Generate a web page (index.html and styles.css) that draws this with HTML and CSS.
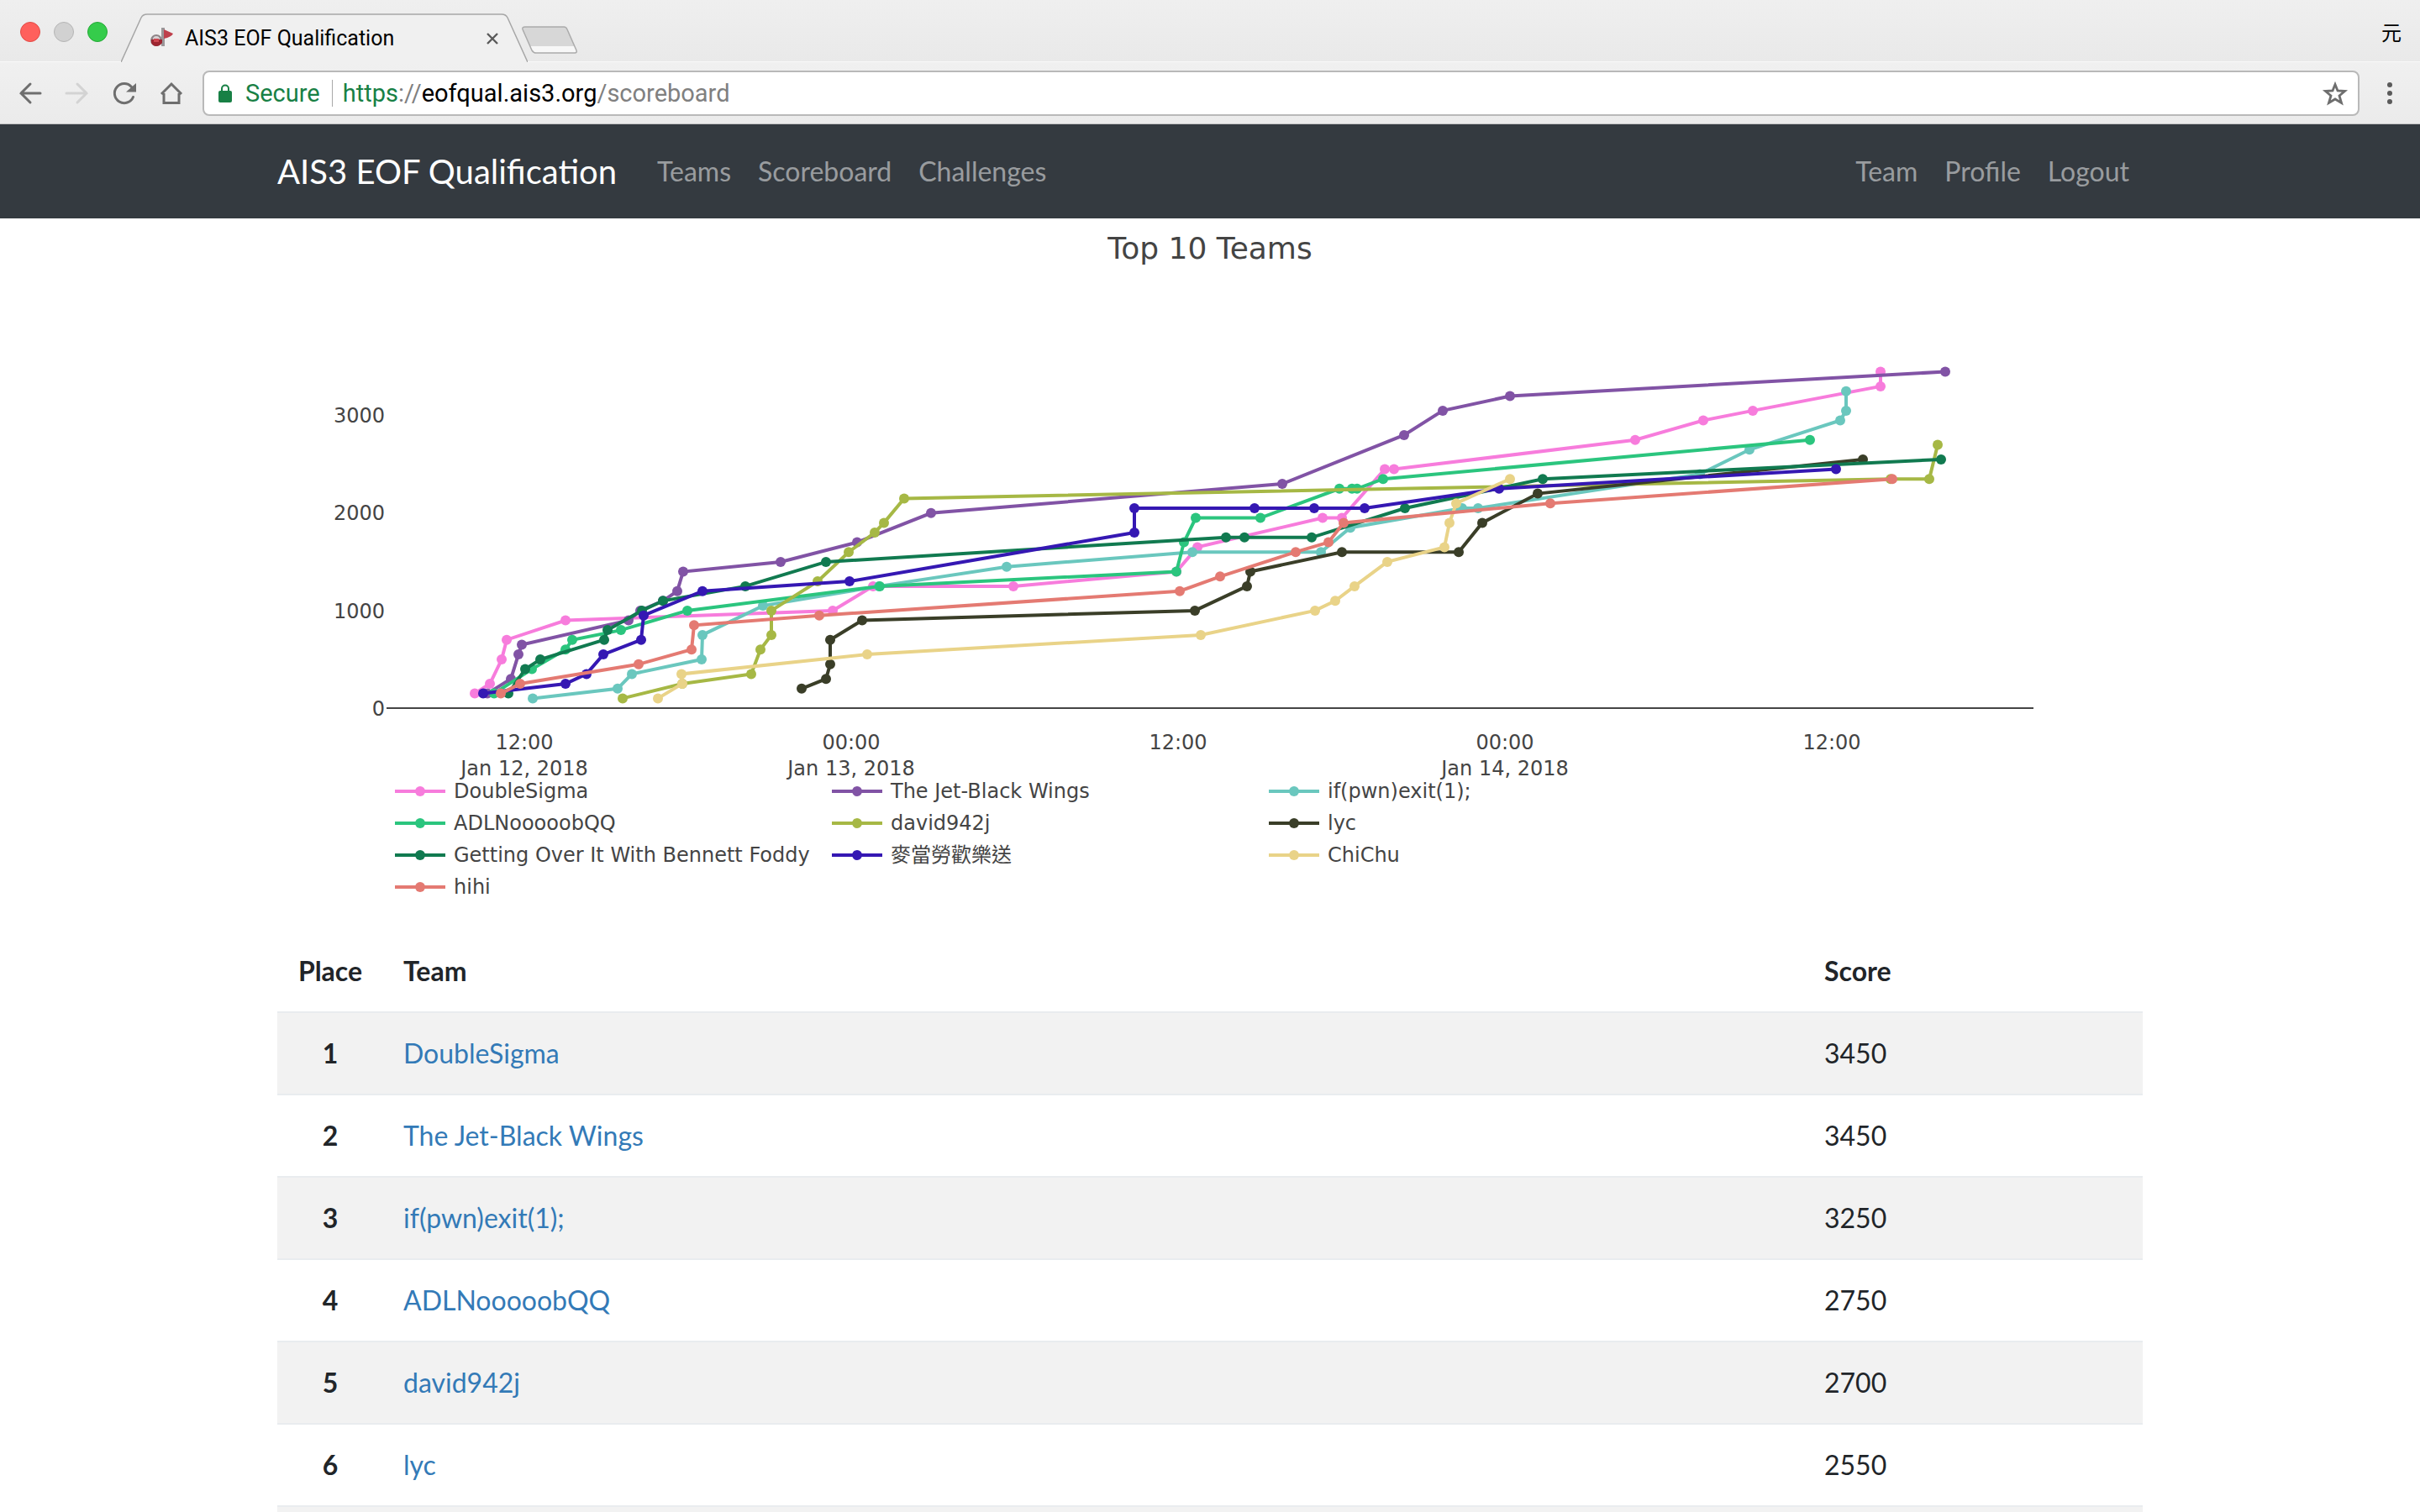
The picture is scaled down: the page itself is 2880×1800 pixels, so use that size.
FILE: index.html
```html
<!DOCTYPE html>
<html lang="en">
<head>
<meta charset="utf-8">
<title>AIS3 EOF Qualification</title>
<link rel="stylesheet" href="styles.css">
</head>
<body>
<div class="browser">
  <header class="chrome">
    <div class="tabstrip">
      <div class="lights">
        <button class="light light-close" aria-label="Close window"></button>
        <button class="light light-min" aria-label="Minimize"></button>
        <button class="light light-max" aria-label="Full screen"></button>
      </div>
      <div class="tab">
        <svg class="tab-shape" viewBox="0 0 484 58" aria-hidden="true"><path d="M0 58 L24 5 Q26 1 31 1 H453 Q458 1 460 5 L484 58" fill="#f0f0f0" stroke="#a6a6a6" stroke-width="1.5"/></svg>
        <svg class="favicon" viewBox="0 0 32 32" aria-hidden="true">
          <path d="M16 3h4v22h-4z" fill="#9a9698"/><path d="M19 5 L30 10 Q28 14 19 16z" fill="#be3f4b"/>
          <circle cx="10" cy="18" r="7" fill="#8f8588"/><circle cx="10" cy="17" r="4" fill="#d9d2d4"/><path d="M4 17h13v4q-3 4-7 4t-6-4z" fill="#9c2530"/><path d="M7 16h6v4H7z" fill="#ce4650"/>
        </svg>
        <span class="tab-title">AIS3 EOF Qualification</span>
        <button class="tab-close" aria-label="Close tab"><svg viewBox="0 0 16 16"><path d="M2 2 L14 14 M14 2 L2 14" stroke="#5a5a5a" stroke-width="2.4"/></svg></button>
      </div>
      <button class="new-tab" aria-label="New tab"><svg viewBox="0 0 68 34"><path d="M5 1 H51 Q54 1 55 4 L66 29 Q67 32 64 32 H18 Q15 32 13 29 L2 4 Q1 1 5 1z" fill="#d7d7d7"/><path d="M11 24 H64 L66 29 Q67 32 64 32 H18 Q15 32 13 29z" fill="#f7f7f7"/><path d="M5 1 H51 Q54 1 55 4 L66 29 Q67 32 64 32 H18 Q15 32 13 29 L2 4 Q1 1 5 1z" fill="none" stroke="#ababab" stroke-width="1.5"/></svg></button>
      <button class="user">元</button>
    </div>
    <div class="toolbar">
      <div class="nav-buttons">
        <button aria-label="Back"><svg viewBox="0 0 32 32"><path d="M28 16 H5 M16 5 L5 16 L16 27" fill="none" stroke="#6e6e6e" stroke-width="3" stroke-linecap="round"/></svg></button>
        <button aria-label="Forward" disabled><svg viewBox="0 0 32 32"><path d="M3 16 H27 M16 5 L27 16 L16 27" fill="none" stroke="#d3d3d3" stroke-width="3" stroke-linecap="round"/></svg></button>
        <button aria-label="Reload"><svg viewBox="0 0 32 32"><path d="M26.500 20.500 A11.500 11.500 0 1 1 24.500 8.500" fill="none" stroke="#6e6e6e" stroke-width="3" stroke-linecap="round"/><path d="M30 4 V14.500 H18z" fill="#6e6e6e"/></svg></button>
        <button aria-label="Home"><svg viewBox="0 0 32 32"><path d="M4 17 L16 5 L28 17 M7 16 V27.500 H25 V16" fill="none" stroke="#6e6e6e" stroke-width="3"/></svg></button>
      </div>
      <div class="address">
        <svg class="lock" viewBox="0 0 16 22" aria-hidden="true"><rect y="8" width="16" height="14" rx="2" fill="#188045"/><path d="M4 9 V5.500 a4 4 0 0 1 8 0 V9" fill="none" stroke="#188045" stroke-width="2"/></svg>
        <span class="secure">Secure</span>
        <span class="divider"></span>
        <div class="url" role="textbox" aria-label="Address" contenteditable="true" spellcheck="false"><span class="scheme">https</span>://<span class="host">eofqual.ais3.org</span>/scoreboard</div>
        <button class="star" aria-label="Bookmark"><svg viewBox="0 0 32 32"><path d="M16 5.500 L19 13 L27.500 13.500 L21 19 L23.500 27.500 L16 23 L8.500 27.500 L11 19 L4.500 13.500 L13 13z" fill="none" stroke="#6e6e6e" stroke-width="2.800"/></svg></button>
      </div>
      <button class="menu" aria-label="Menu"><svg viewBox="0 0 32 32"><g fill="#5a5a5a"><circle cx="16" cy="6" r="3"/><circle cx="16" cy="16" r="3"/><circle cx="16" cy="26" r="3"/></g></svg></button>
    </div>
  </header>

  <div class="page">
    <nav class="navbar">
      <div class="container navbar-inner">
        <a class="brand" href="#">AIS3 EOF Qualification</a>
        <a class="nav-link" href="#">Teams</a>
        <a class="nav-link" href="#">Scoreboard</a>
        <a class="nav-link" href="#">Challenges</a>
        <span class="spacer"></span>
        <a class="nav-link" href="#">Team</a>
        <a class="nav-link" href="#">Profile</a>
        <a class="nav-link" href="#">Logout</a>
      </div>
    </nav>
    <main class="container">
      <section class="chart">
        <svg id="plot" class="plot" viewBox="330 260 2220 662" role="img" aria-label="Top 10 Teams">
          <text class="plot-title" x="1440" y="308" text-anchor="middle">Top 10 Teams</text>
          <g class="tick" text-anchor="end">
            <text x="458" y="503">3000</text>
            <text x="458" y="619">2000</text>
            <text x="458" y="736">1000</text>
            <text x="458" y="852">0</text>
          </g>
          <g class="tick" text-anchor="middle">
            <text x="624" y="892">12:00</text><text x="624" y="923">Jan 12, 2018</text>
            <text x="1013" y="892">00:00</text><text x="1013" y="923">Jan 13, 2018</text>
            <text x="1402" y="892">12:00</text>
            <text x="1791" y="892">00:00</text><text x="1791" y="923">Jan 14, 2018</text>
            <text x="2180" y="892">12:00</text>
          </g>
          <path d="M460 843 H2420" stroke="#444" stroke-width="2"/>
        </svg>
        <ul id="legend" class="legend"></ul>
      </section>
      <table class="scores">
        <colgroup><col class="col-place"><col><col class="col-score"></colgroup>
        <thead><tr><th scope="col" class="place">Place</th><th scope="col">Team</th><th scope="col">Score</th></tr></thead>
        <tbody>
          <tr><th scope="row" class="place">1</th><td><a href="#">DoubleSigma</a></td><td>3450</td></tr>
          <tr><th scope="row" class="place">2</th><td><a href="#">The Jet-Black Wings</a></td><td>3450</td></tr>
          <tr><th scope="row" class="place">3</th><td><a href="#">if(pwn)exit(1);</a></td><td>3250</td></tr>
          <tr><th scope="row" class="place">4</th><td><a href="#">ADLNooooobQQ</a></td><td>2750</td></tr>
          <tr><th scope="row" class="place">5</th><td><a href="#">david942j</a></td><td>2700</td></tr>
          <tr><th scope="row" class="place">6</th><td><a href="#">lyc</a></td><td>2550</td></tr>
          <tr><td></td><td></td><td></td></tr>
        </tbody>
      </table>
    </main>
  </div>
</div>
<script src="chart.js"></script>
</body>
</html>
```
FILE: styles.css
```css
* { box-sizing: border-box; }
body {
  margin: 0;
  background: #fff;
  color: #212529;
  font: 32px/48px Lato, "Noto Sans CJK TC", sans-serif;
}
button { border: 0; padding: 0; background: none; font: inherit; color: inherit; }
button svg { display: block; width: 100%; height: 100%; }
a { color: #337ab7; text-decoration: none; }

.browser { height: 100vh; display: flex; flex-direction: column; overflow: hidden; }

/* Browser chrome */
.chrome {
  flex: none;
  font-family: Roboto, "Noto Sans CJK TC", sans-serif;
  border-bottom: 1px solid #c3c3c3;
}
.tabstrip {
  height: 74px;
  display: flex;
  align-items: flex-end;
  background: linear-gradient(#efefef, #e9e9e9);
  border-bottom: 1px solid #f8f8f8;
}
.lights { display: flex; gap: 16px; padding: 0 16px 23px 24px; }
.light { width: 24px; height: 24px; border-radius: 50%; border: 1px solid; }
.light-close { background: #ff605c; border-color: #e24b46; }
.light-min { background: #d1d1d1; border-color: #b5b5b5; }
.light-max { background: #35cc4b; border-color: #24a936; }
.tab {
  position: relative;
  width: 484px;
  height: 58px;
  margin-bottom: -1px;
  padding: 2px 34px 0 32px;
  display: flex;
  align-items: center;
}
.tab-shape { position: absolute; inset: 0; width: 100%; height: 100%; }
.favicon, .tab-title, .tab-close { position: relative; }
.favicon { width: 32px; height: 32px; }
.tab-title { flex: 1; padding-left: 12px; font-size: 25px; line-height: 32px; color: #000; }
.tab-close { width: 16px; height: 16px; }
.new-tab { width: 68px; height: 34px; margin: 0 0 8px -8px; }
.user { margin-left: auto; padding-right: 22px; font-size: 24px; line-height: 32px; margin-bottom: 17px; color: #000; }
.toolbar {
  height: 73px;
  display: flex;
  align-items: center;
  background: linear-gradient(#f0f0f0, #ebebeb);
}
.nav-buttons { display: flex; gap: 24px; padding: 0 21px 0 20px; }
.nav-buttons button, .star, .menu { width: 32px; height: 32px; flex: none; }
.address {
  flex: 1;
  height: 54px;
  display: flex;
  align-items: center;
  padding: 0 11px 0 17px;
  background: #fff;
  border: 2px solid #b9b9b9;
  border-radius: 8px;
  font-size: 29px;
  line-height: 40px;
}
.lock { width: 16px; height: 22px; }
.secure { padding-left: 16px; color: #188045; }
.divider { width: 1px; height: 32px; margin: 0 12px 0 14px; background: #a8a8a8; }
.url { flex: 1; color: #808080; white-space: nowrap; }
.scheme { color: #188045; }
.host { color: #000; }
.menu { margin: 0 20px; }

/* Site */
.page { flex: 1; min-height: 0; overflow: hidden; }
.container { max-width: 2280px; margin: 0 auto; padding: 0 30px; }
.navbar { background: #343a40; }
.navbar-inner { display: flex; align-items: center; height: 112px; }
.brand { margin-right: 32px; font-size: 40px; line-height: 60px; color: #fff; }
.nav-link { padding: 0 16px; color: rgba(255, 255, 255, .5); }
.spacer { flex: 1; }

.chart { font-family: "DejaVu Sans", "Noto Sans CJK TC", sans-serif; color: #444; }
.plot { display: block; width: 100%; overflow: visible; fill: #444; }
.plot-title { font-size: 36px; }
.tick { font-size: 24px; }
.legend {
  margin: 0;
  padding: 1px 0 33px 140px;
  display: grid;
  grid-template-columns: repeat(3, 520px);
  list-style: none;
  font-size: 24px;
  line-height: 38px;
}
.legend li { display: flex; align-items: center; gap: 10px; white-space: nowrap; }
.swatch { width: 60px; height: 16px; flex: none; }

.scores { width: 100%; border-collapse: separate; border-spacing: 0; table-layout: fixed; }
.col-place { width: 126px; }
.col-score { width: 403px; }
.scores th, .scores td { padding: 24px; text-align: left; }
.scores .place { text-align: center; }
.scores tbody th, .scores tbody td { border-top: 2px solid #e9ecef; }
.scores tbody tr:nth-child(odd) { background: #f2f2f2; }
```
FILE: chart.js
```js
// Each series is a list of [time position, score] pairs.
const series = [
  ["DoubleSigma", "#f77cdc", [[565,150],[583,250],[597,500],[603,700],[673,900],[991,1000],[1039,1250],[1206,1250],[1400,1400],[1425,1650],[1574,1950],[1597,1950],[1648,2450],[1659,2450],[1946,2750],[2027,2950],[2086,3050],[2238,3300],[2238,3450]]],
  ["The Jet-Black Wings", "#8153a5", [[580,150],[608,300],[617,550],[621,650],[748,900],[762,1000],[789,1100],[806,1200],[813,1400],[929,1500],[1020,1700],[1108,2000],[1526,2300],[1671,2800],[1717,3050],[1797,3200],[2315,3450]]],
  ["if(pwn)exit(1);", "#6ac7be", [[634,100],[735,200],[752,350],[835,500],[836,750],[908,1050],[1046,1250],[1198,1450],[1419,1600],[1572,1600],[1607,1850],[1740,2050],[1759,2050],[2023,2400],[2082,2650],[2190,2950],[2197,3050],[2197,3250]]],
  ["ADLNooooobQQ", "#2bc57e", [[588,150],[633,400],[673,600],[681,700],[739,800],[818,1000],[1047,1250],[1400,1400],[1409,1700],[1423,1950],[1500,1950],[1594,2250],[1609,2250],[1615,2250],[1646,2350],[2154,2750]]],
  ["david942j", "#a6b845", [[741,100],[812,250],[894,350],[905,600],[918,750],[918,1000],[973,1300],[1010,1600],[1041,1800],[1052,1900],[1076,2150],[2250,2350],[2296,2350],[2306,2700]]],
  ["lyc", "#3a3e28", [[954,200],[983,300],[988,450],[988,700],[1026,900],[1422,1000],[1484,1250],[1488,1400],[1597,1600],[1736,1600],[1764,1900],[1830,2200],[2217,2550]]],
  ["Getting Over It With Bennett Foddy", "#117a50", [[605,150],[625,400],[643,500],[719,700],[723,800],[764,1000],[789,1100],[887,1250],[983,1500],[1459,1750],[1481,1750],[1561,1750],[1672,2050],[1836,2350],[2310,2550]]],
  ["麥當勞歡樂送", "#3518b3", [[575,150],[673,250],[698,350],[718,550],[763,700],[766,950],[836,1200],[1011,1300],[1350,1800],[1350,2050],[1493,2050],[1564,2050],[1624,2050],[1784,2250],[2185,2450]]],
  ["ChiChu", "#e9d388", [[783,100],[812,250],[811,350],[1032,550],[1429,750],[1565,1000],[1589,1100],[1612,1250],[1651,1500],[1719,1650],[1725,1900],[1733,2100],[1797,2350]]],
  ["hihi", "#e47a72", [[596,150],[619,250],[760,450],[823,600],[826,850],[975,950],[1404,1200],[1452,1350],[1542,1600],[1581,1700],[1599,1900],[1845,2100],[2252,2350]]]
];

const scaleY = score => 843 - score * 0.1161;
let marks = "";
let items = "";
for (const [name, color, data] of series) {
  const points = data.map(([x, score]) => [x, scaleY(score).toFixed(1)]);
  marks += `<polyline points="${points.join(" ")}" fill="none" stroke="${color}" stroke-width="4"/>`;
  marks += points.map(([x, y]) => `<circle cx="${x}" cy="${y}" r="6" fill="${color}"/>`).join("");
  items += `<li><svg class="swatch" viewBox="0 0 60 16"><path d="M0 8H60" stroke="${color}" stroke-width="4"/><circle cx="30" cy="8" r="6" fill="${color}"/></svg>${name}</li>`;
}
document.getElementById("plot").insertAdjacentHTML("beforeend", marks);
document.getElementById("legend").innerHTML = items;
```
